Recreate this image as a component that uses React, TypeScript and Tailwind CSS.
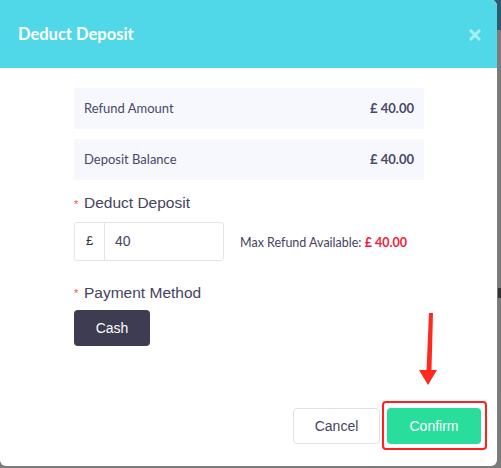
import React from "react";

const src = { fontFamily: "Lato, 'Open Sans', sans-serif" };
const helv = { fontFamily: "'Liberation Sans', Arial, sans-serif" };

function InfoRow({ label, value }: { label: string; value: string }) {
  return (
    <div className="flex h-[41px] items-center justify-between bg-[#f7f8fd] px-[10px] text-[13px] text-[#4a4866]" style={src}>
      <span>{label}</span>
      <span className="font-bold">{value}</span>
    </div>
  );
}

function FieldLabel({ children }: { children: React.ReactNode }) {
  return (
    <div className="flex items-center text-[15.5px] leading-none text-[#45435e]" style={helv}>
      <span className="mt-[3px] w-[10px] text-[11px] text-[#f5533d]">*</span>
      {children}
    </div>
  );
}

export default function App() {
  return (
    <div className="relative h-[468px] w-[501px] overflow-hidden bg-[#7b7b7b]">
      {/* page behind the modal */}
      <div className="absolute right-0 top-0 h-[30px] w-[6px] bg-[#2e5a6a]" />
      <div className="absolute right-0 top-[288px] h-[10px] w-[3px] bg-[#333]" />

      <div className="relative flex h-[466px] w-[497px] flex-col overflow-hidden rounded-b-[6px] rounded-tr-[6px] bg-white">
        <div className="flex h-[68px] shrink-0 items-center justify-between bg-[#50d7e8] pl-[18px] pr-[16px]">
          <h2 className="text-[16.5px] font-bold text-white" style={src}>Deduct Deposit</h2>
          <svg width="12" height="12" viewBox="0 0 12 12" className="mt-[2px]">
            <path d="M2 2 L10 10 M10 2 L2 10" stroke="#a8eef5" strokeWidth="3" strokeLinecap="square" />
          </svg>
        </div>

        <div className="flex flex-1 flex-col px-[74px] pt-[20px]">
          <div className="flex w-[350px] flex-col gap-[10px]">
            <InfoRow label="Refund Amount" value="£ 40.00" />
            <InfoRow label="Deposit Balance" value="£ 40.00" />
          </div>

          <div className="mt-[15px]">
            <FieldLabel>Deduct Deposit</FieldLabel>
          </div>
          <div className="mt-[11px] flex items-center">
            <div className="flex h-[39px] w-[150px] rounded-[3px] border border-[#e4e4ea]">
              <div className="flex w-[30px] items-center justify-center border-r border-[#e4e4ea] text-[13px] text-[#333]" style={helv}>£</div>
              <div className="flex items-center pl-[10px] text-[14px] text-[#45435e]" style={helv}>40</div>
            </div>
            <div className="ml-[16px] mt-[4px] text-[12.5px] text-[#45435e]" style={src}>
              Max Refund Available: <span className="font-bold text-[#ee1c3a]">£ 40.00</span>
            </div>
          </div>

          <div className="mt-[24px]">
            <FieldLabel>Payment Method</FieldLabel>
          </div>
          <div className="mt-[10px]">
            <button className="h-[36px] w-[76px] rounded-[4px] bg-[#3e3c52] text-[14px] text-white" style={helv}>Cash</button>
          </div>
        </div>

        <div className="flex justify-end gap-[7px] pb-[22px] pr-[16px]">
          <button className="h-[36px] w-[87px] rounded-[4px] border border-[#e2e2e6] bg-white text-[14px] text-[#45435e]" style={helv}>Cancel</button>
          <button className="h-[36px] w-[94px] rounded-[4px] bg-[#29de9d] text-[14px] text-white" style={helv}>Confirm</button>
        </div>

        {/* annotation */}
        <div className="pointer-events-none absolute left-[382px] top-[401px] h-[49px] w-[105px] rounded-[4px] border-2 border-[#ff2121]" />
        <svg className="pointer-events-none absolute left-[415px] top-[310px]" width="26" height="80" viewBox="0 0 26 80">
          <path d="M14 3 L18 3 L16.5 60 L22 60 L13 75 L4 60 L11.5 60 Z" fill="#ff2a1f" />
        </svg>
      </div>
    </div>
  );
}
